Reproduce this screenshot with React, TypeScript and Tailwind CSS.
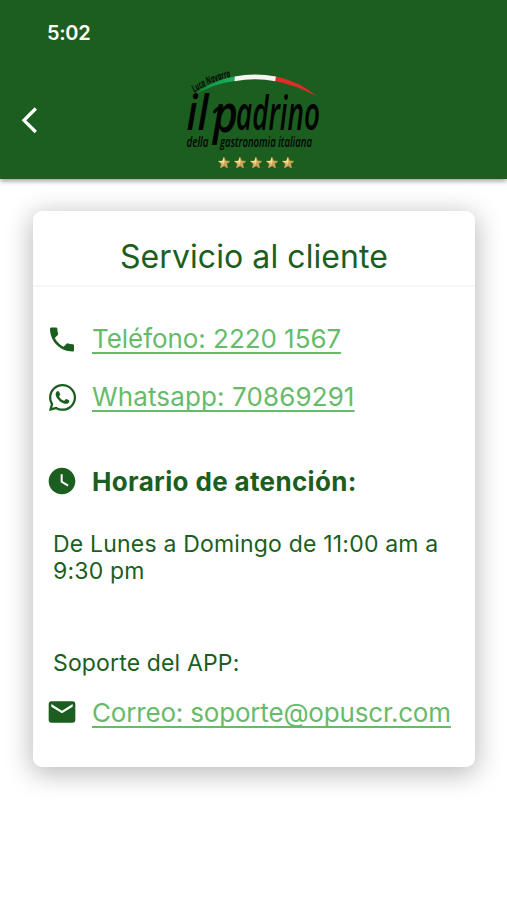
import { MdPhone, MdWatchLater, MdEmail } from "react-icons/md";
import { FaWhatsapp } from "react-icons/fa";
import type { ReactNode } from "react";

function Star({ x }: { x: number }) {
  return (
    <g transform={`translate(${x} 103)`}>
      <path d="M0-6 1.6-2.1 5.8-1.8 2.6.9 3.6 5 0 2.8-3.6 5-2.6.9-5.8-1.8-1.6-2.1Z" fill="#dfbb6c" stroke="#c99a48" strokeWidth="0.5" />
      <path d="M0-6 0 0-5.8-1.8-1.6-2.1Z" fill="#f3dfa6" />
      <path d="M0 0 3.6 5 0 2.8ZM0 0 5.8-1.8 2.6.9Z" fill="#c4924a" />
    </g>
  );
}

function Logo() {
  return (
    <svg width="150" height="120" viewBox="0 0 150 120" className="overflow-visible font-['Open_Sans',sans-serif] italic" aria-label="il padrino">
      <defs>
        <linearGradient id="green" x1="0" x2="1">
          <stop offset="0" stopColor="#0b8a3f" />
          <stop offset="1" stopColor="#19b45c" />
        </linearGradient>
        <path id="arc" d="M14.500 32.500Q31 21 56 15.500" />
      </defs>
      <path d="M13 36Q30 21 54 16.500L54.500 21Q32 24 13 36Z" fill="url(#green)" />
      <path d="M54.500 16.500Q75 12.500 96 16.500L95.500 21.200Q75 17.500 54.500 21.200Z" fill="#f4f5f1" />
      <path d="M96 16.500Q119 21 137 36.500Q115 24.500 95.500 21.200Z" fill="#e02b2b" />
      <text fontSize="10.500" fontWeight="700" fill="#050b05">
        <textPath href="#arc" textLength="40" lengthAdjust="spacingAndGlyphs">Luca Navarra</textPath>
      </text>
      <g fill="#020402" fontWeight="600">
        <text x="6.500" y="69.500" fontSize="48" textLength="22" lengthAdjust="spacingAndGlyphs">il</text>
        <path d="M34.500 52Q36.500 48.500 42 46.500" fill="none" stroke="#020402" strokeWidth="3" strokeLinecap="round" />
        <text x="33" y="72" fontSize="52" textLength="25" lengthAdjust="spacingAndGlyphs">p</text>
        <text x="56" y="69.500" fontSize="47" textLength="84" lengthAdjust="spacingAndGlyphs">adrino</text>
        <text x="6.500" y="87" fontSize="15" textLength="22" lengthAdjust="spacingAndGlyphs">della</text>
        <text x="40" y="87" fontSize="15" textLength="92" lengthAdjust="spacingAndGlyphs">gastronomia italiana</text>
      </g>
      <Star x={44} />
      <Star x={60} />
      <Star x={76} />
      <Star x={92} />
      <Star x={108} />
    </svg>
  );
}

function Row({ icon, className, children }: { icon: ReactNode; className: string; children: ReactNode }) {
  return (
    <div className={`flex h-8 items-center whitespace-nowrap ${className}`}>
      <span className="mr-[14px] flex w-8 shrink-0 justify-center">{icon}</span>
      {children}
    </div>
  );
}

const link =
  "text-[26px] leading-8 text-[#66bb6a] underline decoration-[1.5px] underline-offset-[4px] [text-decoration-skip-ink:none]";

export default function App() {
  return (
    <div className="h-[900px] w-[507px] overflow-hidden bg-white font-[Inter,sans-serif] text-[#1b5e20]">
      <header className="h-[179px] bg-[#1b5e20] text-white shadow-[0_2px_5px_rgba(0,0,0,0.4)]">
        <div className="pt-[21px] pl-[47px] text-[20px] leading-6 font-semibold tracking-[-0.3px]">5:02</div>
        <div className="flex pt-[15px]">
          <button className="ml-[20px] mt-[46px] h-[28px] w-[20px]" aria-label="Atrás">
            <svg width="20" height="28" viewBox="0 0 20 28" fill="none" stroke="currentColor" strokeWidth="3.300">
              <path d="M15.800 2.500 4 14.300 15.800 26" />
            </svg>
          </button>
          <div className="ml-[140px]">
            <Logo />
          </div>
        </div>
      </header>
      <main className="ml-[33px] mt-[32px] h-[556px] w-[442px] rounded-[9px] bg-white shadow-[0_5px_26px_2px_rgba(0,0,0,0.27)]">
        <h1 className="h-[76px] border-b-2 border-[#f5f5f5] pt-[26px] text-center text-[32px] leading-10 tracking-[0.08px]">
          Servicio al cliente
        </h1>
        <div className="pl-[13px]">
          <Row className="mt-[36px]" icon={<MdPhone size={33} />}>
            <a className={`${link} tracking-[-0.05px]`}>Teléfono: 2220 1567</a>
          </Row>
          <Row className="mt-[26px]" icon={<FaWhatsapp size={31} />}>
            <a className={`${link} tracking-[0.12px]`}>Whatsapp: 70869291</a>
          </Row>
          <Row className="mt-[52px]" icon={<MdWatchLater size={32} />}>
            <strong className="pt-px text-[26px] leading-8 font-bold tracking-[0.35px]">Horario de atención:</strong>
          </Row>
          <p className="mt-[34px] ml-[7px] text-[23px] leading-[27px] tracking-[0.19px] whitespace-nowrap">
            De Lunes a Domingo de 11:00 am a
            <br />
            9:30 pm
          </p>
          <p className="mt-[65px] ml-[7px] text-[23px] leading-[27px] tracking-[0.15px]">Soporte del APP:</p>
          <Row className="mt-[19px]" icon={<MdEmail size={32} />}>
            <a className={`${link} pt-px tracking-[-0.18px]`}>Correo: soporte@opuscr.com</a>
          </Row>
        </div>
      </main>
    </div>
  );
}
